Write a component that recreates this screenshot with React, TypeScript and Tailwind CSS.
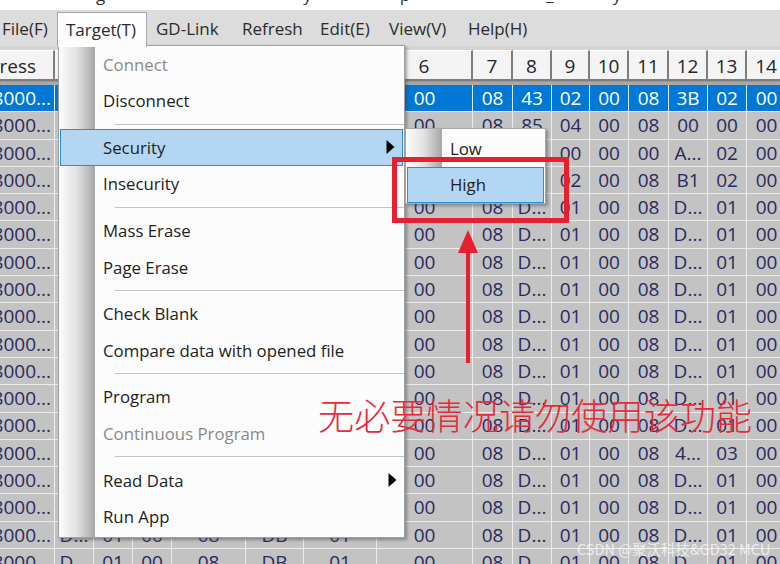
const COLS = "grid grid-cols-[55px_39px_39px_39px_74px_58px_73px_96px_40px_39px_38px_39px_40px_39px_39px_40px]";

const headers = ["ress", "0", "1", "2", "3", "4", "5", "6", "7", "8", "9", "10", "11", "12", "13", "14"];

const tails = [
  ["08", "43", "02", "00", "08", "3B", "02", "00"],
  ["08", "85", "04", "00", "08", "00", "00", "00"],
  ["08", "D...", "00", "00", "00", "A...", "02", "00"],
  ["08", "D...", "02", "00", "08", "B1", "02", "00"],
];
const plain = ["08", "D...", "01", "00", "08", "D...", "01", "00"];
const odd = ["08", "D...", "01", "00", "08", "4...", "03", "00"];

const rows = Array.from({ length: 18 }, (_, i) => {
  const tail = i < 4 ? tails[i] : i === 13 ? odd : plain;
  return ["8000...", "D...", "01", "00", "08", "DB", "01", "00", ...tail];
});

function MenuItem({ label, disabled, arrow, active }: { label: string; disabled?: boolean; arrow?: boolean; active?: boolean }) {
  return (
    <div
      className={
        "relative flex h-[36.6px] items-center text-[16.8px] " +
        (disabled ? "text-[#8a8a8a] " : "text-[#222222] ") +
        (active ? "mx-px border border-[#2a8fd8] bg-[#b3d7f3] pl-[42px]" : "pl-[44px]")
      }
    >
      {label}
      {arrow && (
        <svg className="absolute right-[7px] top-1/2 -translate-y-1/2" width="9" height="15" viewBox="0 0 9 15">
          <path d="M0.5 0.5 L8.5 7.5 L0.5 14.5 Z" fill="#000000" />
        </svg>
      )}
    </div>
  );
}

function Sep() {
  return (
    <div className="flex h-[10px] items-center pl-[56px]">
      <div className="h-px w-full bg-[#c4c4c4]" />
    </div>
  );
}

export default function App() {
  return (
    <div className="relative h-[564px] w-[780px] overflow-hidden bg-[#c3c3c3] font-['Open_Sans','Noto_Sans',sans-serif]">
      {/* Clipped window title */}
      <div className="flex h-[10px] overflow-hidden bg-white pl-[96px] text-[17px] leading-[20px] text-[#333333]">
        <span className="-mt-[15px]">g</span>
        <span className="-mt-[15px] ml-[198px]">y</span>
        <span className="-mt-[15px] ml-[88px]">p</span>
        <span className="-mt-[15px] ml-[136px]">_</span>
        <span className="-mt-[15px] ml-[59px]">y</span>
      </div>

      {/* Menu bar */}
      <div className="flex h-[36px] items-center bg-[#dcdcdc] text-[17px] text-[#2b2b2b]">
        <span className="w-[57px] pl-[2px] pt-[1px]">File(F)</span>
        <div className="relative z-20 -mb-[1px] mt-[2px] flex h-[35px] w-[90px] items-center border border-b-0 border-[#a6a6a6] bg-[#fdfdfd] pb-[1px] pl-[8px]">
          Target(T)
        </div>
        <span className="ml-[9px] w-[86px] pt-[1px]">GD-Link</span>
        <span className="w-[78px] pt-[1px]">Refresh</span>
        <span className="w-[69px] pt-[1px]">Edit(E)</span>
        <span className="w-[79px] pt-[1px]">View(V)</span>
        <span className="pt-[1px]">Help(H)</span>
      </div>

      {/* Table header */}
      <div className="bg-[#d4d4d4] pt-[4px]">
        <div className={COLS + " h-[31px] text-[19px] text-[#262626]"}>
          {headers.map((h, i) => (
            <div
              key={i}
              className={
                "flex items-center overflow-hidden whitespace-nowrap border-t border-r-2 border-b-2 border-t-white border-r-[#7d7d7d] border-b-[#7d7d7d] bg-[#f4f4f4] pt-[2px] " +
                (i === 0 ? "justify-end pr-[17px]" : "justify-center")
              }
            >
              {h}
            </div>
          ))}
        </div>
        <div className="h-[4px] border-t border-dotted border-[#8c8c8c] bg-[#a8a8a8]" />
      </div>

      {/* Table rows */}
      <div className="text-[19px]">
        {rows.map((row, r) => (
          <div
            key={r}
            className={COLS + " h-[27.3px] " + (r === 0 ? "bg-[#0078d7] text-white" : "bg-[#c3c3c3] text-[#2a2a60]")}
          >
            {row.map((cell, c) => (
              <div
                key={c}
                className={
                  "flex items-center overflow-hidden whitespace-nowrap border-r border-b " +
                  (r === 0 ? "border-r-[#d8e8f5] border-b-[#e4e4e4] " : "border-r-[#ececec] border-b-[#ececec] ") +
                  (c === 0 ? "justify-end pr-[3px]" : "justify-center")
                }
              >
                {cell}
              </div>
            ))}
          </div>
        ))}
      </div>

      {/* Target menu */}
      <div className="absolute left-[58px] top-[45px] z-10 h-[493px] w-[347px] border border-[#a0a0a0] bg-[#fcfcfc] shadow-[2px_2px_3px_rgba(60,60,60,0.45)]">
        <div className="absolute bottom-0 left-0 top-0 w-[36px] bg-gradient-to-r from-[#fcfcfc] via-[#e2e2e2] to-[#a6a6a6]" />
        <div className="relative">
          <MenuItem label="Connect" disabled />
          <MenuItem label="Disconnect" />
          <Sep />
          <MenuItem label="Security" arrow active />
          <MenuItem label="Insecurity" />
          <Sep />
          <MenuItem label="Mass Erase" />
          <MenuItem label="Page Erase" />
          <Sep />
          <MenuItem label="Check Blank" />
          <MenuItem label="Compare data with opened file" />
          <Sep />
          <MenuItem label="Program" />
          <MenuItem label="Continuous Program" disabled />
          <Sep />
          <MenuItem label="Read Data" arrow />
          <MenuItem label="Run App" />
        </div>
      </div>

      {/* Security submenu */}
      <div className="absolute left-[405px] top-[128px] z-20 h-[76px] w-[141px] border border-[#a8a8a8] bg-[#fcfcfc] pt-[1px] shadow-[2px_2px_3px_rgba(60,60,60,0.45)]">
        <div className="absolute bottom-0 left-0 top-0 w-[36px] bg-gradient-to-r from-[#fcfcfc] via-[#e2e2e2] to-[#a6a6a6]" />
        <div className="relative">
          <MenuItem label="Low" />
          <MenuItem label="High" active />
        </div>
      </div>

      {/* Red annotation box */}
      <div className="absolute left-[392px] top-[157px] z-30 h-[66px] w-[177px] border-[5px] border-[#e71f2f]" />

      {/* Red annotation arrow */}
      <svg className="absolute left-[455px] top-[228px] z-30" width="26" height="136" viewBox="0 0 26 136">
        <path d="M13 2 L23 25 L15 25 L15 135 L11 135 L11 25 L3 25 Z" fill="#e71f2f" />
      </svg>

      {/* Annotation text */}
      <div className="absolute left-[318px] top-[392px] z-30 whitespace-nowrap font-['Noto_Sans_CJK_SC',sans-serif] text-[36.2px] font-light leading-[44px] text-[#ea2a38]">
        无必要情况请勿使用该功能
      </div>

      {/* Watermark */}
      <div className="absolute left-[577px] top-[539px] z-30 whitespace-nowrap font-['Noto_Sans_CJK_SC',sans-serif] text-[14.5px] leading-[20px] text-white/70">
        CSDN @聚沃科技&amp;GD32 MCU
      </div>
    </div>
  );
}
